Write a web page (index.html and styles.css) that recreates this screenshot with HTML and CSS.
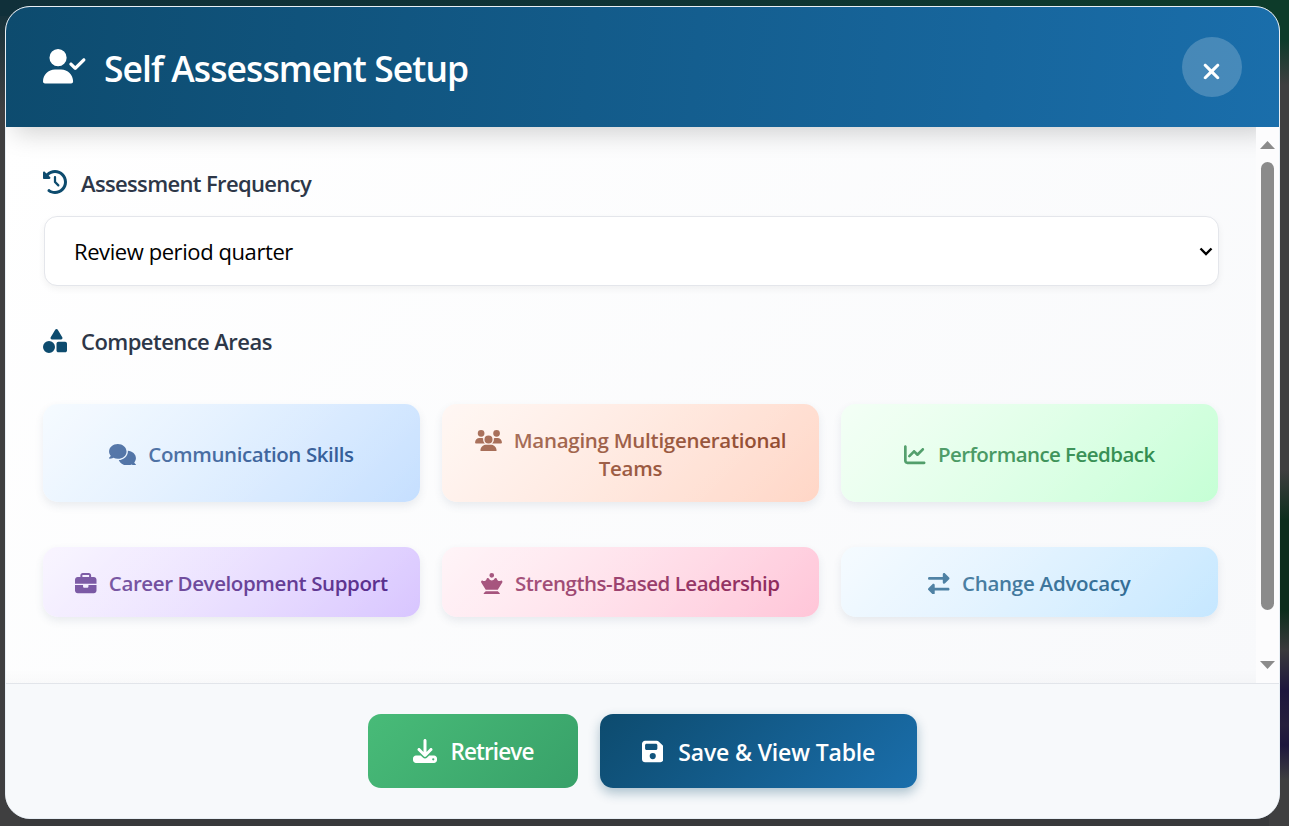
FILE: index.html
```html
<!DOCTYPE html>
<html lang="en">
<head>
<meta charset="utf-8">
<title>Self Assessment Setup</title>
<link rel="stylesheet" href="styles.css">
</head>
<body>
<div class="modal">
  <header class="modal-header">
    <svg class="title-icon" viewBox="0 0 640 512"><path d="M96 128a128 128 0 1 1 256 0A128 128 0 1 1 96 128zM0 482.3C0 383.8 79.8 304 178.3 304h91.4C368.2 304 448 383.8 448 482.3c0 16.4-13.3 29.7-29.7 29.7H29.7C13.3 512 0 498.7 0 482.3zM625 177L497 305c-9.4 9.4-24.6 9.4-33.9 0l-64-64c-9.4-9.4-9.4-24.6 0-33.9s24.6-9.4 33.9 0l47 47L591 143c9.4-9.4 24.6-9.4 33.9 0s9.4 24.6 0 33.9z"/></svg>
    <h1 class="title">Self Assessment Setup</h1>
    <button class="close" aria-label="Close">
      <svg viewBox="0 0 384 512"><path d="M342.6 150.6c12.5-12.5 12.5-32.8 0-45.3s-32.8-12.5-45.3 0L192 210.7 86.6 105.4c-12.5-12.5-32.8-12.5-45.3 0s-12.5 32.8 0 45.3L146.7 256 41.4 361.4c-12.5 12.5-12.5 32.8 0 45.3s32.8 12.5 45.3 0L192 301.3 297.4 406.6c12.5 12.5 32.8 12.5 45.3 0s12.5-32.8 0-45.3L237.3 256 342.6 150.6z"/></svg>
    </button>
  </header>
  <div class="modal-body">
    <main class="content">
      <div class="label">
        <svg class="label-icon" viewBox="0 0 512 512"><path d="M75 75L41 41C25.9 25.9 0 36.6 0 57.9V168c0 13.3 10.7 24 24 24H134.1c21.4 0 32.1-25.9 17-41l-30.8-30.8C155 85.5 203 64 256 64c106 0 192 86 192 192s-86 192-192 192c-40.8 0-78.6-12.7-109.7-34.4c-14.5-10.1-34.4-6.6-44.6 7.9s-6.6 34.4 7.9 44.6C151.2 495 201.7 512 256 512c141.4 0 256-114.6 256-256S397.4 0 256 0C185.3 0 121.3 28.7 75 75zm181 53c-13.3 0-24 10.7-24 24V256c0 6.4 2.5 12.5 7 17l72 72c9.4 9.4 24.6 9.4 33.9 0s9.4-24.6 0-33.9l-65-65V152c0-13.3-10.7-24-24-24z"/></svg>
        <span class="label-text">Assessment Frequency</span>
      </div>
      <div class="select-wrap">
        <select class="select"><option>Review period quarter</option></select>
        <svg class="chevron" viewBox="0 0 14 9"><path d="M1.5 1.5L7 7L12.5 1.5"/></svg>
      </div>
      <div class="label label-areas">
        <svg class="label-icon" viewBox="0 0 512 512"><path d="M315.4 15.5C309.7 5.9 299.2 0 288 0s-21.7 5.9-27.4 15.5l-96 160c-5.9 9.9-6.1 22.2-.4 32.2s16.3 16.2 27.8 16.2H384c11.5 0 22.2-6.2 27.8-16.2s5.5-22.3-.4-32.2l-96-160zM288 312V456c0 22.1 17.9 40 40 40H472c22.1 0 40-17.9 40-40V312c0-22.1-17.9-40-40-40H328c-22.1 0-40 17.9-40 40zM128 512a128 128 0 1 0 0-256 128 128 0 1 0 0 256z"/></svg>
        <span class="label-text label-text-areas">Competence Areas</span>
      </div>
      <div class="cards">
        <div class="card blue"><div class="card-text"><svg class="wide" viewBox="0 0 640 512"><path d="M208 352c114.9 0 208-78.8 208-176S322.9 0 208 0S0 78.8 0 176c0 38.6 14.7 74.3 39.6 103.4c-3.5 9.4-8.7 17.7-14.2 24.7c-4.8 6.2-9.7 11-13.3 14.3c-1.8 1.6-3.3 2.9-4.3 3.7c-.5 .4-.9 .7-1.1 .8l-.2 .2C1 327.2-1.4 334.4 .8 340.9S9.1 352 16 352c21.8 0 43.8-5.6 62.1-12.5c9.2-3.5 17.8-7.4 25.2-11.4C134.1 343.3 169.8 352 208 352zM448 176c0 112.3-99.1 196.9-216.5 207C255.8 457.4 336.4 512 432 512c38.2 0 73.9-8.7 104.7-23.9c7.5 4 16 7.9 25.2 11.4c18.3 6.9 40.3 12.5 62.1 12.5c6.9 0 13.1-4.5 15.2-11.1c2.1-6.6-.2-13.8-5.8-17.9l-.2-.2c-.2-.2-.6-.4-1.1-.8c-1-.8-2.5-2-4.3-3.7c-3.6-3.3-8.5-8.1-13.3-14.3c-5.5-7-10.7-15.4-14.2-24.7c24.9-29 39.6-64.7 39.6-103.4c0-92.8-84.9-168.9-192.6-175.5c.4 5.1 .6 10.3 .6 15.5z"/></svg>Communication Skills</div></div>
        <div class="card orange"><div class="card-text"><svg class="wide" viewBox="0 0 640 512"><path d="M144 0a80 80 0 1 1 0 160A80 80 0 1 1 144 0zM512 0a80 80 0 1 1 0 160A80 80 0 1 1 512 0zM0 298.7C0 239.8 47.8 192 106.7 192h42.7c15.9 0 31 3.5 44.6 9.7c-1.3 7.2-1.9 14.7-1.9 22.3c0 38.2 16.8 72.5 43.3 96c-.2 0-.4 0-.7 0H21.3C9.6 320 0 310.4 0 298.7zM405.3 320c-.2 0-.4 0-.7 0c26.6-23.5 43.3-57.8 43.3-96c0-7.6-.7-15-1.9-22.3c13.6-6.3 28.7-9.7 44.6-9.7h42.7C592.2 192 640 239.8 640 298.7c0 11.8-9.6 21.3-21.3 21.3H405.3zM224 224a96 96 0 1 1 192 0 96 96 0 1 1 -192 0zM128 485.3C128 411.7 187.7 352 261.3 352H378.7C452.3 352 512 411.7 512 485.3c0 14.7-11.9 26.7-26.7 26.7H154.7c-14.7 0-26.7-11.9-26.7-26.7z"/></svg>Managing Multigenerational Teams</div></div>
        <div class="card green"><div class="card-text"><svg viewBox="0 0 512 512"><path d="M64 64c0-17.7-14.3-32-32-32S0 46.3 0 64V400c0 44.2 35.8 80 80 80H480c17.7 0 32-14.3 32-32s-14.3-32-32-32H80c-8.8 0-16-7.2-16-16V64zm406.6 86.6c12.5-12.5 12.5-32.8 0-45.3s-32.8-12.5-45.3 0L320 210.7l-57.4-57.4c-12.5-12.5-32.8-12.5-45.3 0l-112 112c-12.5 12.5-12.5 32.8 0 45.3s32.8 12.5 45.3 0L240 221.3l57.4 57.4c12.5 12.5 32.8 12.5 45.3 0l128-128z"/></svg>Performance Feedback</div></div>
        <div class="card purple"><div class="card-text"><svg viewBox="0 0 512 512"><path d="M184 48H328c4.4 0 8 3.6 8 8V96H176V56c0-4.4 3.6-8 8-8zm-56 8V96H64C28.7 96 0 124.7 0 160v96H192 320 512V160c0-35.3-28.7-64-64-64H384V56c0-30.9-25.1-56-56-56H184c-30.9 0-56 25.1-56 56zM512 288H320v32c0 17.7-14.3 32-32 32H224c-17.7 0-32-14.3-32-32V288H0V416c0 35.3 28.7 64 64 64H448c35.3 0 64-28.7 64-64V288z"/></svg>Career Development Support</div></div>
        <div class="card pink"><div class="card-text"><svg viewBox="0 0 512 512"><path d="M256 0a56 56 0 1 1 0 112A56 56 0 1 1 256 0zM134.1 143.8c3.3-13 15-23.8 30.2-23.8c12.3 0 22.6 7.2 27.7 17c12 23.2 36.2 39 64 39s52-15.8 64-39c5.1-9.8 15.4-17 27.7-17c15.3 0 27 10.8 30.2 23.8c7 27.8 32.2 48.3 62.1 48.3c10.8 0 21-2.7 29.8-7.4c8.4-4.4 18.9-4.5 27.6 .9c13 8 17.1 25 9.2 38L399.7 400H112.3L5.4 223.6c-7.9-13-3.8-30 9.2-38c8.7-5.3 19.2-5.3 27.6-.9c8.9 4.7 19 7.4 29.8 7.4c29.9 0 55.1-20.5 62.1-48.3zM112 432H400l41.4 41.4c4.2 4.2 6.6 10 6.6 16c0 12.5-10.1 22.6-22.6 22.6H86.6C74.1 512 64 501.9 64 489.4c0-6 2.4-11.8 6.6-16L112 432z"/></svg>Strengths-Based Leadership</div></div>
        <div class="card sky"><div class="card-text"><svg viewBox="0 0 512 512"><path d="M32 96l320 0V32c0-12.9 7.8-24.6 19.8-29.6s25.7-2.2 34.9 6.9l96 96c6 6 9.4 14.1 9.4 22.6s-3.4 16.6-9.4 22.6l-96 96c-9.2 9.2-22.9 11.9-34.9 6.9s-19.8-16.6-19.8-29.6V160L32 160c-17.7 0-32-14.3-32-32s14.3-32 32-32zM480 352c17.7 0 32 14.3 32 32s-14.3 32-32 32H160v64c0 12.9-7.8 24.6-19.8 29.6s-25.7 2.2-34.9-6.9l-96-96c-6-6-9.4-14.1-9.4-22.6s3.4-16.6 9.4-22.6l96-96c9.2-9.2 22.9-11.9 34.9-6.9s19.8 16.6 19.8 29.6l0 64H480z"/></svg>Change Advocacy</div></div>
      </div>
    </main>
    <div class="scrollbar">
      <svg class="arrow" viewBox="0 0 15 8"><path d="M0 8L7.5 0L15 8z"/></svg>
      <div class="thumb"></div>
      <svg class="arrow arrow-down" viewBox="0 0 15 8"><path d="M0 0L7.5 8L15 0z"/></svg>
    </div>
  </div>
  <footer class="modal-footer">
    <button class="btn retrieve"><svg class="download" viewBox="0 0 512 512"><path d="M288 32c0-17.7-14.3-32-32-32s-32 14.3-32 32V274.7l-73.4-73.4c-12.5-12.5-32.8-12.5-45.3 0s-12.5 32.8 0 45.3l128 128c12.5 12.5 32.8 12.5 45.3 0l128-128c12.5-12.5 12.5-32.8 0-45.3s-32.8-12.5-45.3 0L288 274.7V32zM64 352c-35.3 0-64 28.7-64 64v32c0 35.3 28.7 64 64 64H448c35.3 0 64-28.7 64-64V416c0-35.3-28.7-64-64-64H346.5l-45.3 45.3c-25 25-65.5 25-90.5 0L165.5 352H64zm368 56a24 24 0 1 1 0 48 24 24 0 1 1 0-48z"/></svg><span>Retrieve</span></button>
    <button class="btn save"><svg class="disk" viewBox="0 0 448 512"><path d="M64 32C28.7 32 0 60.7 0 96V416c0 35.3 28.7 64 64 64H384c35.3 0 64-28.7 64-64V173.3c0-17-6.7-33.3-18.7-45.3L352 50.7C340 38.7 323.7 32 306.7 32H64zm0 96c0-17.7 14.3-32 32-32H288c17.7 0 32 14.3 32 32v64c0 17.7-14.3 32-32 32H96c-17.7 0-32-14.3-32-32V128zM224 288a64 64 0 1 1 0 128 64 64 0 1 1 0-128z"/></svg><span>Save &amp; View Table</span></button>
  </footer>
</div>
</body>
</html>
```
FILE: styles.css
```css
* { box-sizing: border-box; }
svg { fill: currentColor; display: block; flex: none; }
body {
  margin: 0;
  height: 826px;
  overflow: hidden;
  padding: 6px 9px 7px 5px;
  font-family: "Open Sans", "Noto Sans", sans-serif;
  background:
    linear-gradient(180deg, #0d3b2a 0, #0d3b2a 40px, #3f3f40 85px, #3f3f40 470px, #0c2e1c 520px, #0c2e1c 610px, #3a3a3c 650px, #1d163c 690px, #261f3c 725px, #1d163c 745px, #3f3f40 780px) right / 20px 100% no-repeat,
    linear-gradient(90deg, #10303a, #0e3335 50%, #0d3b2a) top / 100% 16px no-repeat,
    linear-gradient(180deg, #10303a 0, #3f3f40 110px, #3f3f40 100%) left / 20px 100% no-repeat,
    #38393b;
}
.modal {
  height: 813px;
  display: flex;
  flex-direction: column;
  border: 1px solid #e8eff5;
  border-radius: 25px;
  overflow: hidden;
  background: #f8f9fc;
}
.modal-header {
  position: relative;
  z-index: 1;
  height: 120px;
  flex: none;
  display: flex;
  align-items: center;
  padding: 0 37px;
  color: #fff;
  background: linear-gradient(95deg, #0d4b6e, #1a6eab);
  box-shadow: 0 14px 24px -8px rgba(0, 0, 0, .18);
}
.title-icon { width: 43px; height: 34.5px; margin-top: -1px; }
.title {
  margin: 2px auto 0 18px;
  font-size: 35.5px;
  font-weight: 600;
  line-height: 48px;
  letter-spacing: -.93px;
  white-space: nowrap;
}
.close {
  width: 60px;
  height: 60px;
  padding: 8px 1px 0 0;
  border: 0;
  border-radius: 50%;
  color: #fff;
  background: rgba(255, 255, 255, .2);
  display: flex;
  align-items: center;
  justify-content: center;
}
.close svg { width: 19px; height: 25px; }
.modal-body {
  flex: 1;
  min-height: 0;
  display: flex;
}
.content {
  flex: 1;
  padding: 39px 37px 0 38px;
  background:
    linear-gradient(0deg, rgba(0, 0, 0, .015), transparent 14px),
    linear-gradient(135deg, #fff, #f8f9fb);
}
.label {
  height: 34px;
  display: flex;
  align-items: center;
  gap: 14px;
  color: #2d3748;
}
.label-icon { width: 24px; height: 24px; margin: -3px 0 0 -1px; color: #0d4b6e; }
.label-text {
  font-size: 22px;
  font-weight: 600;
  letter-spacing: -.65px;
  white-space: nowrap;
}
.label-text-areas { letter-spacing: -.55px; }
.select-wrap {
  display: grid;
  align-items: center;
  height: 70px;
  margin-top: 16px;
}
.select-wrap > * { grid-area: 1 / 1; }
.select {
  appearance: none;
  width: 100%;
  height: 70px;
  margin: 0;
  padding: 0 0 0 29px;
  border: 1px solid #e4e6eb;
  border-radius: 13px;
  color: #000;
  background: #fff;
  box-shadow: 0 3px 7px rgba(0, 0, 0, .05);
  font: 400 22px "Open Sans", "Noto Sans", sans-serif;
  letter-spacing: -.42px;
}
.chevron {
  position: relative;
  justify-self: end;
  width: 14px;
  height: 9px;
  margin-right: 6px;
  pointer-events: none;
  fill: none;
  stroke: #000;
  stroke-width: 2.4;
}
.label-areas { margin-top: 38px; }
.label-areas .label-icon { margin-top: -1px; }
.cards {
  display: grid;
  grid-template-columns: repeat(3, 1fr);
  grid-template-rows: 98px 70px;
  gap: 45px 22px;
  margin: 46px 1px 0 -1px;
}
.card {
  position: relative;
  display: flex;
  align-items: center;
  justify-content: center;
  padding: 2px 30px 0;
  overflow: hidden;
  border-radius: 15px;
  box-shadow: 0 4px 9px rgba(60, 80, 110, .1);
}
/* sheen over the card and its text */
.card::after {
  content: "";
  position: absolute;
  inset: 0;
  background: linear-gradient(135deg, rgba(255, 255, 255, .3), rgba(255, 255, 255, 0));
}
.card-text {
  font-size: 20.5px;
  font-weight: 600;
  line-height: 28px;
  letter-spacing: -.4px;
  text-align: center;
}
.card-text svg {
  display: inline-block;
  width: 21.5px;
  height: 21.5px;
  margin-right: 12px;
  vertical-align: -3px;
}
.card-text svg.wide { width: 27px; }
.blue { color: #245090; background: linear-gradient(135deg, #f2f9ff, #c5dfff); }
.orange { color: #8c4124; background: linear-gradient(135deg, #fff4ef, #ffd6c6); }
.green { color: #228442; background: linear-gradient(135deg, #effff2, #c5ffd5); }
.purple { color: #512588; background: linear-gradient(135deg, #f6f1ff, #d8c5ff); }
.pink { color: #8a1f55; background: linear-gradient(135deg, #fff0f5, #ffc5d8); }
.sky { color: #20608c; background: linear-gradient(135deg, #f1f9ff, #c5e7ff); }
.orange .card-text { letter-spacing: -.27px; margin: 0 -4px; }
.green .card-text { letter-spacing: -.55px; }
.pink .card-text { letter-spacing: -.48px; }
.sky .card-text { letter-spacing: -.25px; }
.scrollbar {
  position: relative;
  z-index: 2;
  width: 23px;
  flex: none;
  padding: 14px 0;
  display: flex;
  flex-direction: column;
  align-items: center;
  background: #fcfcfd;
  color: #8b8b8b;
}
.arrow { width: 15px; height: 8px; }
.arrow-down { margin-top: auto; }
.thumb {
  width: 13px;
  height: 448px;
  margin-top: 13px;
  border-radius: 7px;
  background: #8b8b8b;
}
.modal-footer {
  height: 135px;
  flex: none;
  display: flex;
  align-items: center;
  justify-content: center;
  gap: 22px;
  border-top: 1px solid #e2e5ea;
  background: #f7f9fb;
}
.btn {
  height: 74px;
  padding: 1px 0 0;
  display: flex;
  align-items: center;
  justify-content: center;
  border: 0;
  border-radius: 13px;
  color: #fff;
  font: 600 22.5px "Open Sans", "Noto Sans", sans-serif;
  white-space: nowrap;
}
.retrieve { width: 210px; gap: 14px; letter-spacing: -.9px; background: linear-gradient(135deg, #48bb78, #38a169); }
.save { width: 317px; gap: 15px; padding-top: 2px; font-size: 23px; letter-spacing: -.15px; background: linear-gradient(135deg, #0d4b6e, #1a6eab); box-shadow: 0 5px 12px rgba(13, 75, 110, .32); }
.download { width: 24px; height: 24px; margin-top: -2px; }
.disk { width: 21.5px; height: 25px; margin-top: -2px; }
```
